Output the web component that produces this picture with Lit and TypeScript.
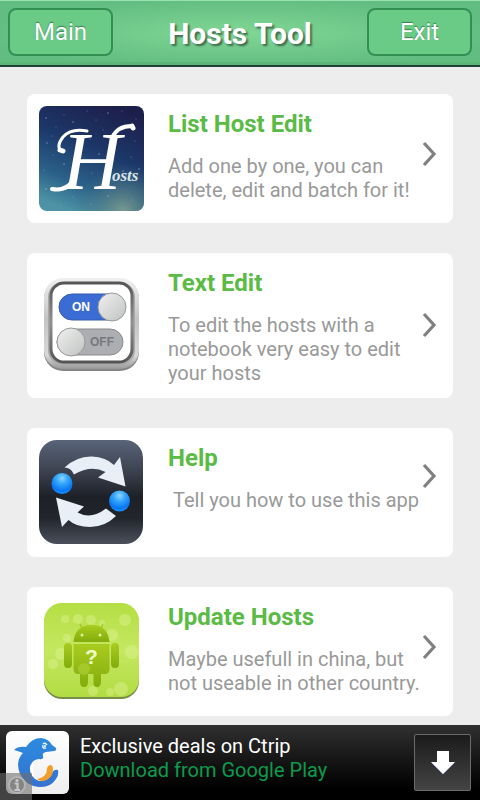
import { LitElement, html, css, svg } from "lit";
import { customElement, property } from "lit/decorators.js";

const sky = svg`
  <defs>
    <linearGradient id="night" x1="0.7" y1="0" x2="0.3" y2="1">
      <stop offset="0" stop-color="#1d1f4b" /><stop offset="0.4" stop-color="#1c3769" />
      <stop offset="0.75" stop-color="#2b6189" /><stop offset="1" stop-color="#4d93a5" />
    </linearGradient>
    <radialGradient id="glow" cx="0.8" cy="1" r="0.45">
      <stop offset="0" stop-color="#8aa58d" stop-opacity="0.8" /><stop offset="1" stop-color="#47757f" stop-opacity="0" />
    </radialGradient>
  </defs>
  <rect width="105" height="105" rx="8" fill="url(#night)" />
  <rect width="105" height="105" rx="8" fill="url(#glow)" />
  <g fill="#b5cadf" opacity="0.55">
    ${[[7,12],[17,21],[25,9],[34,16],[48,5],[57,14],[69,7],[83,5],[97,13],[8,37],[14,49],[5,64],[25,58],[40,44],[51,33],[60,48],[96,35],[92,51],[84,65],[53,67],[37,68],[7,83],[34,91],[52,98],[69,90],[93,94],[22,99],[100,63],[13,30],[64,24]].map(
      ([x, y], i) => svg`<circle cx=${x} cy=${y} r=${i % 3 ? 0.5 : 0.8} />`
    )}
  </g>
  <g fill="none" stroke="#fff" stroke-linecap="round">
    <path d="M48 25Q32 22 24 31Q17 40 22 45" stroke-width="3" />
    <path d="M21 44L24 45" stroke-width="5" />
    <path d="M36 70Q30 86 13 83" stroke-width="4" />
    <path d="M73 32Q78 20 93 20" stroke-width="4" />
    <path d="M93 20L94 22" stroke-width="5" />
  </g>
  <text class="swash" x="23" y="83">H<tspan class="osts" x="73" y="75">osts</tspan></text>`;

const toggles = svg`
  <defs>
    <linearGradient id="frame" x1="0" y1="0" x2="0" y2="1">
      <stop offset="0" stop-color="#f0f0f0" /><stop offset="0.45" stop-color="#c4c4c4" /><stop offset="0.85" stop-color="#d8d8d8" /><stop offset="1" stop-color="#999" />
    </linearGradient>
    <linearGradient id="rim" x1="0" y1="0" x2="0" y2="1">
      <stop offset="0" stop-color="#555" /><stop offset="0.5" stop-color="#919191" /><stop offset="1" stop-color="#555" />
    </linearGradient>
    <linearGradient id="knob" x1="0" y1="0" x2="1" y2="1">
      <stop offset="0" stop-color="#f0f1f0" /><stop offset="1" stop-color="#bfc3c0" />
    </linearGradient>
  </defs>
  <rect x="5" y="7" width="95" height="91" rx="19" fill="#858585" />
  <rect x="5" y="5" width="95" height="91" rx="19" fill="url(#frame)" />
  <rect x="9" y="9" width="87" height="83" rx="15" fill="#a9a9a9" />
  <rect x="12" y="10" width="81" height="79" rx="13" fill="#fff" stroke="url(#rim)" stroke-width="3" />
  <rect x="20" y="21" width="66" height="26" rx="13" fill="#3b6cd4" stroke="#355bae" />
  <circle cx="73" cy="34" r="14" fill="url(#knob)" stroke="#999" />
  <text class="switch on" x="33" y="38">ON</text>
  <rect x="18" y="56" width="66" height="26" rx="13" fill="#adaeb2" stroke="#8a8a8a" />
  <circle cx="32" cy="69" r="14" fill="url(#knob)" stroke="#999" />
  <text class="switch off" x="51" y="73">OFF</text>`;

const cycle = svg`
  <defs>
    <linearGradient id="slate" x1="0" y1="0" x2="0" y2="1">
      <stop offset="0" stop-color="#59647a" /><stop offset="0.25" stop-color="#414856" /><stop offset="0.55" stop-color="#1d2027" />
      <stop offset="0.75" stop-color="#22252c" /><stop offset="1" stop-color="#4b505c" />
    </linearGradient>
    <radialGradient id="ball" cx="0.5" cy="0.25" r="0.75">
      <stop offset="0" stop-color="#8fd6ff" /><stop offset="0.35" stop-color="#37a8fa" /><stop offset="0.8" stop-color="#0875f2" /><stop offset="1" stop-color="#1696ff" />
    </radialGradient>
  </defs>
  <rect width="104" height="104" rx="18" fill="url(#slate)" />
  <path d="M25.500 27.500Q38 16 53 16.500Q67 17 75 25L81 17L86.500 46.500L59 37.500L66.500 32Q52 24.500 35 34.500Q32 27.500 25.500 27.500Z" fill="#e9eff7" />
  <path d="M17 57.500L45 66.500L38.500 72.500Q52 80 67 68.500L77 76Q66 87 51 87Q37 87 29.500 80L23 87Z" fill="#e9eff7" />
  <circle cx="23" cy="43.500" r="10.500" fill="url(#ball)" />
  <circle cx="80.500" cy="61" r="10.500" fill="url(#ball)" />`;

const robot = svg`
  <defs>
    <linearGradient id="lime" x1="0" y1="0" x2="0" y2="1">
      <stop offset="0" stop-color="#b5de44" /><stop offset="0.5" stop-color="#c4e860" /><stop offset="1" stop-color="#b2dc43" />
    </linearGradient>
    <linearGradient id="droid" x1="0" y1="0" x2="0" y2="1">
      <stop offset="0" stop-color="#a9cc20" /><stop offset="1" stop-color="#83ac0b" />
    </linearGradient>
  </defs>
  <rect x="5" y="6" width="95" height="94" rx="18" fill="#798d4b" />
  <rect x="5" y="4" width="95" height="94" rx="18" fill="url(#lime)" />
  <g fill="#e1f59a" opacity="0.4">
    <circle cx="39" cy="20" r="5" /><circle cx="52" cy="21" r="5" /><circle cx="26" cy="20" r="4" /><circle cx="86" cy="21" r="6" />
    <circle cx="73" cy="36" r="6" /><circle cx="22" cy="55" r="6" /><circle cx="14" cy="65" r="5" /><circle cx="93" cy="53" r="7" />
    <circle cx="54" cy="92" r="5" /><circle cx="82" cy="90" r="7" /><circle cx="71" cy="93" r="4" /><circle cx="28" cy="39" r="4" /><circle cx="63" cy="24" r="3" />
  </g>
  <path d="M41 25l4 8M64 25l-4 8" stroke="#a3c830" stroke-width="1.500" />
  <path d="M34.500 43Q36 26 52.500 26T70.500 43Z" fill="url(#droid)" />
  <path d="M34.500 45H70.500V70Q70.500 75 66 75H62V83Q62 88 58 88T54.500 83V75H49V83Q49 88 45 88T41 83V75H39Q34.500 75 34.500 70Z" fill="url(#droid)" />
  <rect x="25" y="44" width="8" height="25" rx="4" fill="url(#droid)" />
  <rect x="72" y="44" width="8" height="25" rx="4" fill="url(#droid)" />
  <circle cx="43" cy="36" r="1.500" fill="#e2f0a0" /><circle cx="61" cy="36" r="1.500" fill="#e2f0a0" />
  <circle cx="45" cy="70" r="6" fill="#bddd50" opacity="0.4" />
  <text class="query" x="46" y="65">?</text>`;

@customElement("host-card")
class HostCard extends LitElement {
  @property() heading = "";
  @property() text = "";
  @property({ attribute: false }) icon: unknown;

  static styles = css`
    :host { display: block; }
    .card {
      display: flex; align-items: center; gap: 25px; width: 100%; box-sizing: border-box;
      padding: 12px 12px 13px; border: 0; border-radius: 8px; background: #fff;
      font-family: Roboto, sans-serif; text-align: left; color: #999; cursor: pointer;
    }
    .icon { width: 104px; height: 104px; flex: none; overflow: visible; }
    .body { flex: 1; min-width: 0; align-self: flex-start; display: flex; align-items: center; }
    .copy { flex: 1; min-width: 0; }
    .heading { display: block; margin-bottom: 12px; font-size: 24px; line-height: 36px; font-weight: 700; color: #5abb45; }
    .text { display: block; font-size: 20px; line-height: 24px; white-space: pre-wrap; }
    .chevron { width: 18px; height: 28px; flex: none; overflow: visible; }
    .swash { font: italic 82px "Liberation Serif", serif; fill: #fff; }
    .osts { font: italic 700 17px "Liberation Serif", serif; fill: #dce6ea; }
    .switch { font: 700 12px "Liberation Sans", sans-serif; }
    .on { fill: #fff; }
    .off { fill: #77787c; }
    .query { font: 700 21px "Liberation Sans", sans-serif; fill: #f0fac8; }
  `;

  render() {
    return html`
      <button class="card" type="button">
        <svg class="icon" viewBox="0 0 104 104" aria-hidden="true">${this.icon}</svg>
        <span class="body">
          <span class="copy">
            <span class="heading">${this.heading}</span>
            <span class="text">${this.text}</span>
          </span>
          <svg class="chevron" viewBox="0 0 18 28" aria-hidden="true">
            <path d="M1 3L11 14L1 25" fill="none" stroke="#808080" stroke-width="3.200" />
          </svg>
        </span>
      </button>`;
  }
}

@customElement("ad-banner")
class AdBanner extends LitElement {
  static styles = css`
    :host { display: block; position: relative; font-family: Roboto, sans-serif; }
    .banner {
      display: flex; align-items: center; gap: 11px; height: 75px; box-sizing: border-box;
      padding: 0 9px 0 6px; background: linear-gradient(#303030, #000 85%);
    }
    .logo { width: 63px; height: 63px; flex: none; }
    .copy { flex: 1; min-width: 0; font-size: 20px; line-height: 24px; color: #fff; text-decoration: none; padding-bottom: 10px; }
    .copy span { display: block; white-space: nowrap; }
    .copy .store { color: #0c9b4d; }
    .download {
      display: grid; place-items: center; width: 57px; height: 57px; flex: none; padding: 0;
      border: 1px solid #6b6b6b; border-radius: 2px; background: linear-gradient(#1b1b1b, #444);
    }
    .arrow { width: 24px; height: 24px; }
    .info {
      position: absolute; left: 0; bottom: 0; width: 32px; height: 27px; padding: 0; border: 0;
      background: rgba(110, 110, 110, 0.6);
    }
    .info svg { display: block; width: 32px; height: 27px; }
  `;

  render() {
    return html`
      <div class="banner">
        <svg class="logo" viewBox="0 0 63 63" role="img" aria-label="Ctrip">
          <defs>
            <linearGradient id="paper" x1="0" y1="0" x2="0" y2="1"><stop offset="0" stop-color="#fff" /><stop offset="1" stop-color="#eee" /></linearGradient>
            <linearGradient id="sea" x1="0" y1="0" x2="0" y2="1"><stop offset="0" stop-color="#2b8be0" /><stop offset="1" stop-color="#3672ce" /></linearGradient>
          </defs>
          <rect width="63" height="63" rx="6" fill="url(#paper)" />
          <path d="M8 19Q12 15 20 16Q26 7 35 7Q43 8 46 14L50 17Q51 20 48 20L40 21Q36 22 37 25Q38 29 33 28Q25 29 24 37Q24 47 33 50Q43 50 46 42Q48 38 52 39Q53 44 50 48Q44 57 33 56Q20 55 14 43Q9 30 17 22Q12 20 8 19Z" fill="url(#sea)" />
          <path d="M44 34Q47 34 47 38Q47 48 37 50Q33 50 31 48Q41 46 41 38Q41 35 44 34Z" fill="#f49d2b" />
          <path d="M29 31Q25 39 29 47Q24 43 24 37Q25 32 29 31Z" fill="#fff" />
          <path d="M37 13Q39 11 41 14M37 14Q36 18 40 17" fill="none" stroke="#fff" stroke-width="1.300" />
          <circle cx="39" cy="15" r="1" fill="#fff" />
        </svg>
        <a class="copy" href="#download"><span>Exclusive deals on Ctrip</span><span class="store">Download from Google Play</span></a>
        <button class="download" type="button" aria-label="Download">
          <svg class="arrow" viewBox="0 0 24 24"><path d="M6 0H18V11H24L12 23L0 11H6Z" fill="#fff" /><path d="M1 12L12 23L23 12" fill="none" stroke="#aeb9ea" /></svg>
        </button>
      </div>
      <button class="info" type="button" aria-label="About this ad">
        <svg viewBox="0 0 32 27">
          <circle cx="17" cy="12" r="8" fill="#858585" stroke="#b5b5b5" stroke-width="1.800" />
          <circle cx="17" cy="7.500" r="1.600" fill="#c8c8c8" />
          <path d="M14.500 10.500H17.500V16.500M14.500 17H20" fill="none" stroke="#c8c8c8" stroke-width="2.200" />
        </svg>
      </button>`;
  }
}

@customElement("app-root")
class AppRoot extends LitElement {
  static styles = css`
    :host { display: flex; flex-direction: column; height: 100vh; background: #ededed; font-family: Roboto, sans-serif; }
    .bar {
      display: flex; align-items: center; justify-content: space-between; flex: none; height: 67px; box-sizing: border-box;
      padding: 0 8px 2px; border-top: 1px solid #9ae2b0; border-bottom: 2px solid #213f38;
      background: radial-gradient(ellipse at center, #80d794, #62bd82 75%);
      box-shadow: inset 0 -3px 0 #5bb577;
    }
    .title { margin: 0; padding-top: 4px; font-size: 30px; line-height: 36px; font-weight: 700; color: #fff; text-shadow: 2px 2px 2px rgba(50, 80, 60, 0.8); }
    .action {
      width: 105px; height: 48px; padding: 0; border: 2px solid #338f52; border-radius: 8px; background: #6acb87;
      font: 24px Roboto, sans-serif; color: #fff; text-shadow: 0 -1px 1px rgba(40, 90, 60, 0.7); cursor: pointer;
    }
    .list { flex: 1; min-height: 0; overflow: auto; scrollbar-width: none; display: flex; flex-direction: column; gap: 30px; padding: 27px 27px 9px; }
    .item { flex: none; }
    .ad { flex: none; }
  `;

  private cards = [
    { heading: "List Host Edit", text: "Add one by one, you can delete, edit and batch for it!", icon: sky },
    { heading: "Text Edit", text: "To edit the hosts with a notebook very easy to edit your hosts", icon: toggles },
    { heading: "Help", text: " Tell you how to use this app", icon: cycle },
    { heading: "Update Hosts", text: "Maybe usefull in china, but not useable in other country.", icon: robot },
  ];

  render() {
    return html`
      <header class="bar">
        <button class="action" type="button">Main</button>
        <h1 class="title">Hosts Tool</h1>
        <button class="action" type="button">Exit</button>
      </header>
      <main class="list">
        ${this.cards.map((c) => html`<host-card class="item" .heading=${c.heading} .text=${c.text} .icon=${c.icon}></host-card>`)}
      </main>
      <ad-banner class="ad"></ad-banner>`;
  }
}
